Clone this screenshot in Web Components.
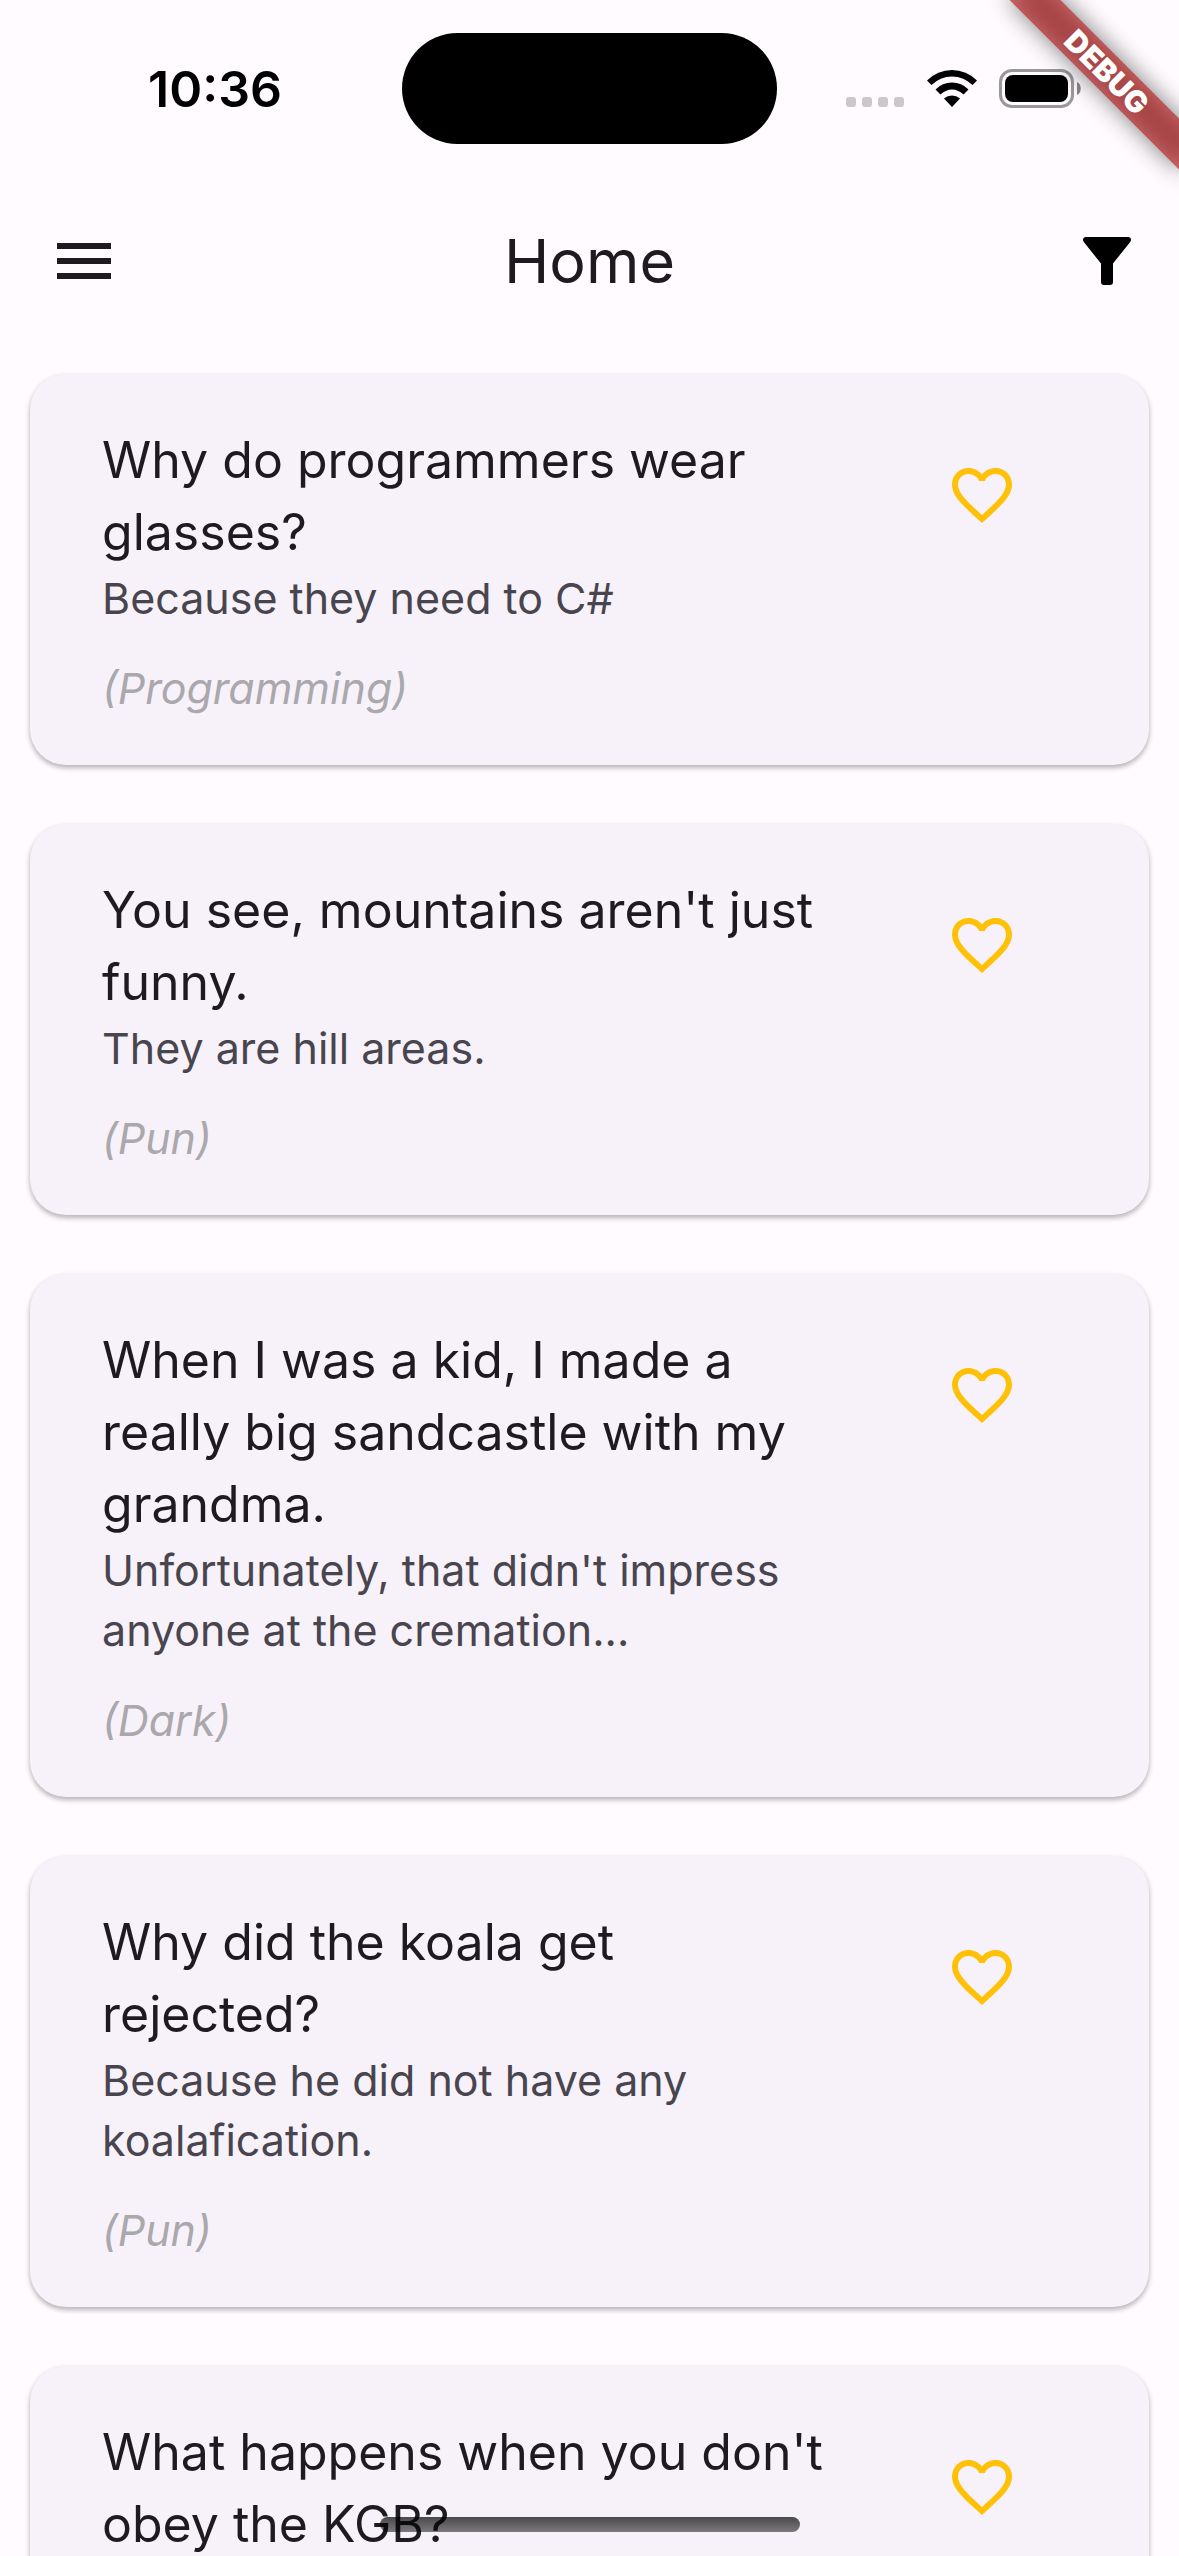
<!DOCTYPE html>
<html lang="en">
<head>
<meta charset="utf-8">
<meta name="viewport" content="width=device-width, initial-scale=1">
<title>Home</title>
<style>
  body { margin: 0; background: #fffbff; font-family: Inter, "Liberation Sans", sans-serif; }
</style>
</head>
<body>
<jokes-screen>
  <status-bar slot="status" time="10:36"></status-bar>
  <app-bar slot="header">Home</app-bar>
  <joke-card>Why do programmers wear glasses?<span slot="punchline">Because they need to C#</span><span slot="category">(Programming)</span></joke-card>
  <joke-card>You see, mountains aren't just funny.<span slot="punchline">They are hill areas.</span><span slot="category">(Pun)</span></joke-card>
  <joke-card>When I was a kid, I made a really big sandcastle with my grandma.<span slot="punchline">Unfortunately, that didn't impress anyone at the cremation...</span><span slot="category">(Dark)</span></joke-card>
  <joke-card>Why did the koala get rejected?<span slot="punchline">Because he did not have any koalafication.</span><span slot="category">(Pun)</span></joke-card>
  <joke-card>What happens when you don't obey the KGB?</joke-card>
  <home-indicator slot="overlay"></home-indicator>
  <debug-banner slot="overlay">DEBUG</debug-banner>
</jokes-screen>

<script>
function define(name, html, setup) {
  const template = document.createElement('template');
  template.innerHTML = html;
  customElements.define(name, class extends HTMLElement {
    constructor() {
      super();
      this.attachShadow({ mode: 'open' }).append(template.content.cloneNode(true));
    }
    connectedCallback() { if (setup) setup(this); }
  });
}

define('jokes-screen', `
  <style>
    :host { display: flex; flex-direction: column; position: relative; height: 100vh; overflow: hidden; background: #fffbff; }
    main { flex: 1; min-height: 0; overflow: hidden; display: flex; flex-direction: column; gap: 59px; padding: 29px 30px 0; }
  </style>
  <slot name="status"></slot>
  <slot name="header"></slot>
  <main><slot></slot></main>
  <slot name="overlay"></slot>`);

define('status-bar', `
  <style>
    :host { display: grid; grid-template-columns: 1fr auto 1fr; align-items: center; height: 177px; flex: none; color: #000; }
    time { text-align: center; padding-left: 28px; font-size: 50px; line-height: 60px; font-weight: 600; }
    .island { width: 375px; height: 111px; border-radius: 56px; background: #000; }
    .icons { display: flex; justify-content: center; padding-right: 28px; }
    svg { display: block; }
  </style>
  <time></time>
  <div class="island"></div>
  <div class="icons">
    <svg width="236" height="40" viewBox="0 0 236 40" role="img" aria-label="Signal, Wi-Fi and battery">
      <g fill="#cac8ca">
        <rect x="0" y="28" width="10" height="10" rx="3"/><rect x="16" y="28" width="10" height="10" rx="3"/>
        <rect x="32" y="28" width="10" height="10" rx="3"/><rect x="48" y="28" width="10" height="10" rx="3"/>
      </g>
      <path d="M81 11.500A35 35 0 0 1 131 11.500L126.500 16A29 29 0 0 0 85.500 16Z"/>
      <path d="M89.500 20.500A23 23 0 0 1 122.500 20.500L117.500 25.500A16 16 0 0 0 94.500 25.500Z"/>
      <path d="M98 29.500A12 12 0 0 1 114 29.500L106 38Z"/>
      <rect x="154.500" y="1.500" width="72" height="36" rx="11.500" fill="none" stroke="#9a989a" stroke-width="3"/>
      <rect x="159" y="6" width="63" height="27" rx="8"/>
      <path d="M231 13c5 2 5 11 0 13z" fill="#8a888a"/>
    </svg>
  </div>`, el => { el.shadowRoot.querySelector('time').textContent = el.getAttribute('time'); });

define('app-bar', `
  <style>
    :host { display: block; flex: none; }
    header { display: grid; grid-template-columns: 144px 1fr 144px; align-items: center; height: 168px; padding: 0 0 0 12px; }
    button { display: grid; place-items: center; width: 144px; height: 144px; padding: 0; border: 0; background: none; color: #1d1b20; }
    h1 { margin: 0; padding-right: 12px; text-align: center; font-size: 61px; line-height: 84px; font-weight: 400; color: #1d1b20; }
  </style>
  <header>
    <button aria-label="Open menu"><svg width="72" height="72" viewBox="0 0 24 24" fill="currentColor"><path d="M3 18h18v-2H3v2zm0-5h18v-2H3v2zm0-7v2h18V6H3z"/></svg></button>
    <h1><slot></slot></h1>
    <button aria-label="Filter"><svg width="48" height="48" viewBox="0 0 48 48" fill="#000"><path d="M3 0H45Q48 0 48 3Q48 4 47 5.300L30 26.500V45Q30 48 27 48H21Q18 48 18 45V26.500L1 5.300Q0 4 0 3Q0 0 3 0Z"/></svg></button>
  </header>`);

define('joke-card', `
  <style>
    :host { display: block; flex: none; }
    article { display: flex; align-items: flex-start; gap: 76px; padding: 50px 95px 47px 72px; border-radius: 36px; background: #f7f2f9; box-shadow: 0 3px 5px rgba(0,0,0,.22), 0 2px 6px rgba(0,0,0,.1); }
    .text { flex: 1; min-width: 0; }
    h2, p { margin: 0; font-weight: 400; }
    h2 { font-size: 50px; line-height: 72px; color: #1d1b20; }
    p { font-size: 43px; line-height: 60px; color: #49454f; }
    .category { margin-top: 30px; font-style: italic; color: #aaa8ac; }
    button { display: grid; place-items: center; flex: none; width: 144px; height: 142px; padding: 0; border: 0; background: none; color: #ffc107; }
  </style>
  <article>
    <div class="text">
      <h2><slot></slot></h2>
      <p><slot name="punchline"></slot></p>
      <p class="category"><slot name="category"></slot></p>
    </div>
    <button aria-label="Add to favourites"><svg width="72" height="72" viewBox="0 0 24 24" fill="currentColor"><path d="M16.500 3c-1.740 0-3.410.810-4.500 2.090C10.910 3.810 9.240 3 7.500 3 4.420 3 2 5.420 2 8.500c0 3.780 3.400 6.860 8.550 11.540L12 21.350l1.450-1.320C18.600 15.360 22 12.280 22 8.500 22 5.420 19.580 3 16.500 3zm-4.400 15.550l-.1.1-.1-.1C7.140 14.240 4 11.390 4 8.500 4 6.500 5.500 5 7.500 5c1.540 0 3.040.990 3.570 2.360h1.870C13.460 5.990 14.960 5 16.500 5c2 0 3.500 1.500 3.500 3.500 0 2.890-3.140 5.740-7.900 10.050z"/></svg></button>
  </article>`);

define('home-indicator', `
  <style>
    :host { position: absolute; left: 0; right: 0; bottom: 24px; display: flex; justify-content: center; pointer-events: none; }
    div { width: 420px; height: 15px; border-radius: 8px; background: linear-gradient(rgba(0,0,0,.7), rgba(0,0,0,.5)); }
  </style>
  <div></div>`);

define('debug-banner', `
  <style>
    :host { position: absolute; top: 0; right: 0; width: 240px; height: 240px; overflow: hidden; pointer-events: none; }
    .band { position: absolute; top: 54px; left: 48px; width: 240px; height: 36px; transform: rotate(45deg); }
    .band::before { content: ""; position: absolute; inset: 0; background: rgba(0,0,0,.5); filter: blur(12px); }
    .label { position: relative; background: rgba(183,28,28,.63); color: #fff; text-align: center; font-size: 30px; line-height: 36px; font-weight: 900; }
  </style>
  <div class="band"><div class="label"><slot></slot></div></div>`);
</script>
</body>
</html>
